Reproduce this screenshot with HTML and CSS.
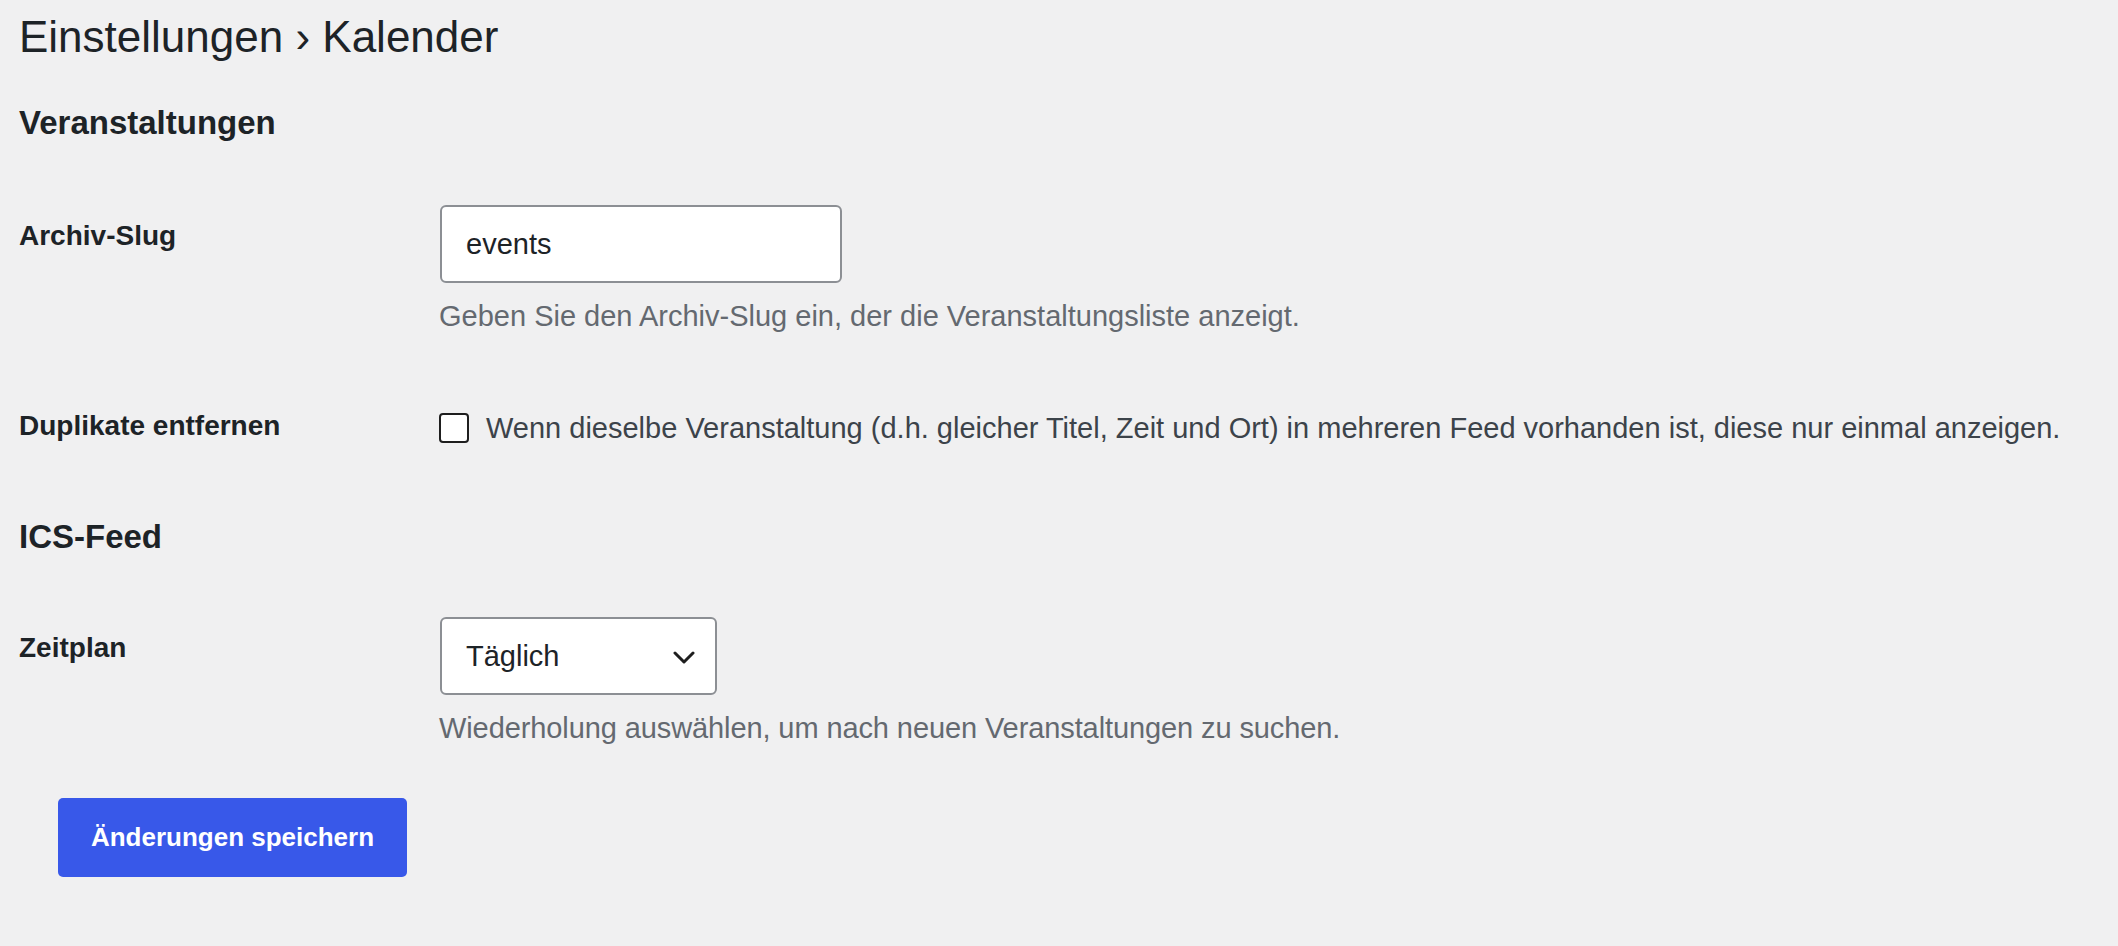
FILE: index.html
```html
<!DOCTYPE html>
<html lang="de">
<head>
<meta charset="utf-8">
<title>Einstellungen › Kalender</title>
<link rel="stylesheet" href="styles.css">
</head>
<body>
<div class="wrap">
  <h1 class="page-title">Einstellungen › Kalender</h1>

  <h2 class="section-title first">Veranstaltungen</h2>
  <div class="form-table first-table">
    <div class="form-row">
      <div class="form-label"><label for="slug">Archiv-Slug</label></div>
      <div class="form-field">
        <input id="slug" class="text-input" type="text" value="events">
        <p class="description">Geben Sie den Archiv-Slug ein, der die Veranstaltungsliste anzeigt.</p>
      </div>
    </div>
    <div class="form-row">
      <div class="form-label"><label for="dupes">Duplikate entfernen</label></div>
      <div class="form-field">
        <label class="check-line" for="dupes">
          <input id="dupes" class="checkbox" type="checkbox">
          <span>Wenn dieselbe Veranstaltung (d.h. gleicher Titel, Zeit und Ort) in mehreren Feed vorhanden ist, diese nur einmal anzeigen.</span>
        </label>
      </div>
    </div>
  </div>

  <h2 class="section-title second">ICS-Feed</h2>
  <div class="form-table second-table">
    <div class="form-row">
      <div class="form-label"><label for="schedule">Zeitplan</label></div>
      <div class="form-field">
        <div class="select-wrap">
          <select id="schedule" class="select">
            <option>Täglich</option>
            <option>Stündlich</option>
            <option>Wöchentlich</option>
          </select>
          <svg class="chevron" width="22" height="13" viewBox="0 0 22 13" aria-hidden="true">
            <path d="M2 2 L11 11 L20 2" fill="none" stroke="#1e1e1e" stroke-width="3" stroke-linecap="round" stroke-linejoin="round"/>
          </svg>
        </div>
        <p class="description narrow">Wiederholung auswählen, um nach neuen Veranstaltungen zu suchen.</p>
      </div>
    </div>
  </div>

  <div class="submit">
    <button class="button-primary" type="button">Änderungen speichern</button>
  </div>
</div>
</body>
</html>
```

FILE: styles.css
```css
html, body {
  margin: 0;
  padding: 0;
  background: #f0f0f1;
}

body {
  font-family: "Liberation Sans", Arial, sans-serif;
  color: #1d2327;
}

.wrap {
  padding: 8px 0 0 19px;
}

.page-title {
  margin: 0;
  font-size: 44px;
  font-weight: 400;
  line-height: 57px;
  color: #1d2327;
}

.section-title {
  margin: 0;
  font-size: 33px;
  font-weight: 700;
  line-height: 43px;
  color: #1d2327;
}

.section-title.first {
  margin-top: 36px;
}

.section-title.second {
  margin-top: 27px;
}

.form-table.first-table {
  margin-top: 34px;
}

.form-table.second-table {
  margin-top: 32px;
}

.form-row {
  display: grid;
  grid-template-columns: 421px 1fr;
}

.form-label {
  padding-top: 40px;
  font-size: 28px;
  font-weight: 700;
  line-height: 36px;
}

.form-field {
  padding: 30px 0;
}

.text-input {
  display: block;
  box-sizing: border-box;
  width: 402px;
  height: 78px;
  margin: -3px 0 0;
  padding: 0 24px;
  border: 2px solid #8c8f94;
  border-radius: 6px;
  background: #fff;
  font-family: "Liberation Sans", Arial, sans-serif;
  font-size: 29px;
  color: #1d2327;
  outline: none;
}

.description {
  margin: 11px 0 0 -1px;
  font-size: 29px;
  line-height: 44px;
  color: #646970;
}

.description.narrow {
  letter-spacing: -0.1px;
}

.check-line {
  display: flex;
  align-items: center;
  height: 60px;
  gap: 17px;
  margin-left: -1px;
  font-size: 29px;
  color: #3c434a;
}

.checkbox {
  appearance: none;
  -webkit-appearance: none;
  box-sizing: border-box;
  width: 30px;
  height: 30px;
  margin: 0;
  flex: none;
  border: 2px solid #1e1e1e;
  border-radius: 4px;
  background: #fff;
}

.select-wrap {
  position: relative;
  width: 277px;
  height: 78px;
  margin-top: -3px;
}

.select {
  appearance: none;
  -webkit-appearance: none;
  box-sizing: border-box;
  width: 277px;
  height: 78px;
  margin: 0;
  padding: 0 24px;
  border: 2px solid #8c8f94;
  border-radius: 6px;
  background: #fff;
  font-family: "Liberation Sans", Arial, sans-serif;
  font-size: 29px;
  color: #1d2327;
  outline: none;
}

.chevron {
  position: absolute;
  right: 22px;
  top: 34px;
  pointer-events: none;
}

.submit {
  margin-top: 18px;
  padding-left: 39px;
}

.button-primary {
  box-sizing: border-box;
  width: 349px;
  height: 79px;
  margin: 0;
  padding: 0;
  border: none;
  border-radius: 5px;
  background: #3858e9;
  color: #fff;
  font-family: "Liberation Sans", Arial, sans-serif;
  font-size: 26px;
  font-weight: 700;
  cursor: pointer;
}
```
